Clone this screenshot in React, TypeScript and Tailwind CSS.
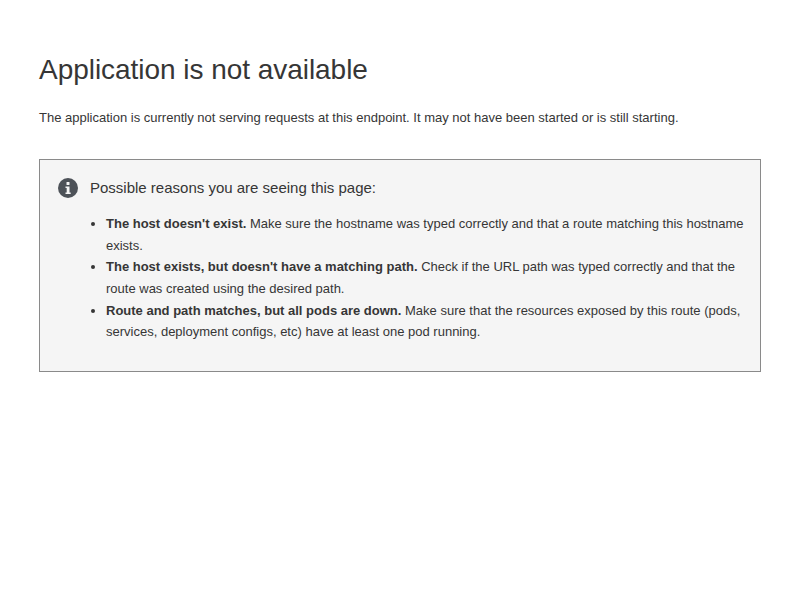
export default function App() {
  return (
    <div className="bg-white min-h-[600px] px-[39px] pt-[51px] text-[#363636] font-['Liberation_Sans',Arial,sans-serif]">
      <h1 className="text-[28px] leading-[38px] font-normal tracking-[-0.04px]">Application is not available</h1>
      <p className="mt-[19px] text-[13px] leading-[20px]">The application is currently not serving requests at this endpoint. It may not have been started or is still starting.</p>
      <div className="mt-[31px] border border-[#8a8a8a] bg-[#f5f5f5] h-[213px] pt-[15px] pl-[18px] pr-[15px]">
        <div className="flex items-center gap-[12px] h-[26px]">
          <svg width="20" height="20" viewBox="0 0 20 20" className="shrink-0">
            <circle cx="10" cy="10" r="10" fill="#4d5258" />
            <rect x="8.5" y="4" width="3" height="3" rx="0.5" fill="#f5f5f5" />
            <path d="M7.5 8.5h4v6h1.2v1.5H7.5v-1.5h1.2v-4.5H7.5z" fill="#f5f5f5" />
          </svg>
          <span className="text-[15px] leading-[24px]">Possible reasons you are seeing this page:</span>
        </div>
        <ul className="list-disc pl-[48px] mt-[12px] text-[13px] leading-[21.67px]">
          <li><b>The host doesn't exist.</b> Make sure the hostname was typed correctly and that a route matching this hostname exists.</li>
          <li><b>The host exists, but doesn't have a matching path.</b> Check if the URL path was typed correctly and that the route was created using the desired path.</li>
          <li><b>Route and path matches, but all pods are down.</b> Make sure that the resources exposed by this route (pods, services, deployment configs, etc) have at least one pod running.</li>
        </ul>
      </div>
    </div>
  );
}
